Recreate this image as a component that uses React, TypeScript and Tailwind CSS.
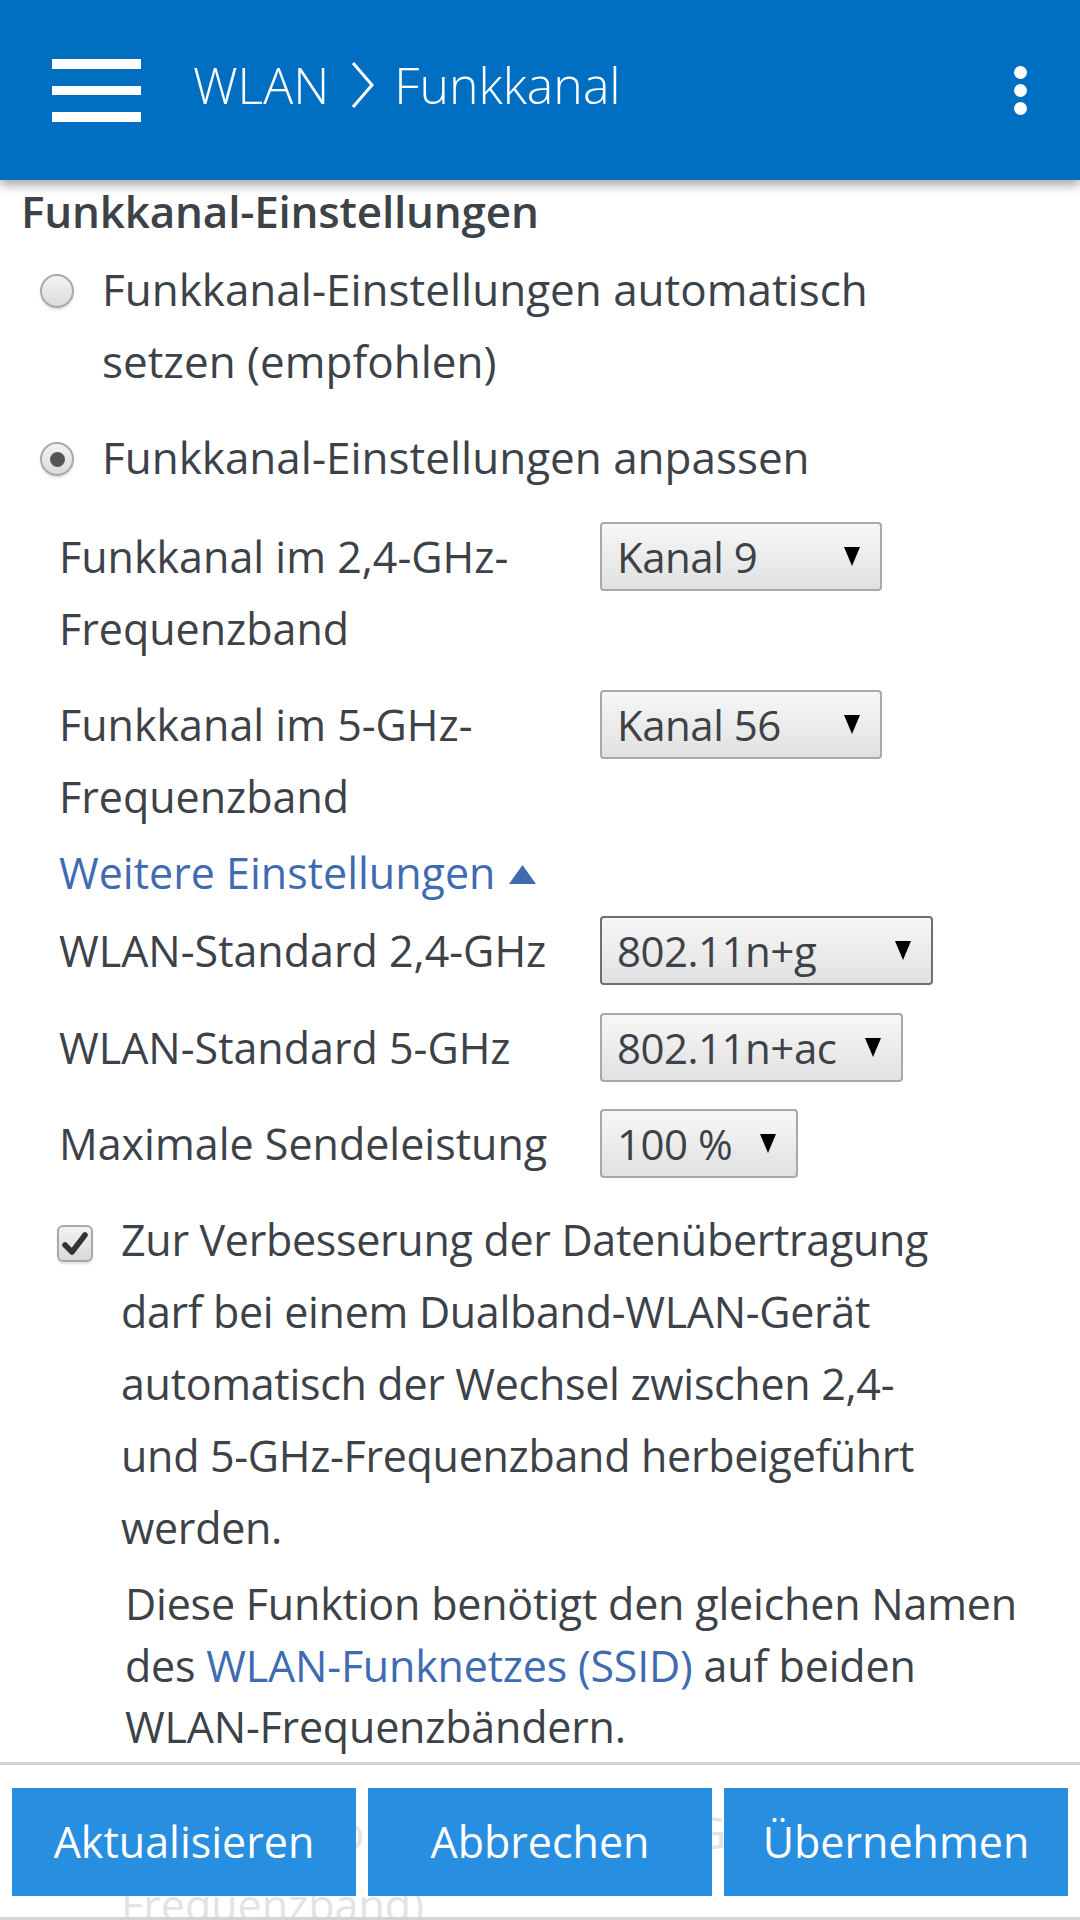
import React from "react";

const FONT = { fontFamily: '"Open Sans", "Noto Sans", Arial, sans-serif' };

function Radio({ checked }: { checked?: boolean }) {
  return (
    <div className="mt-[21px] flex h-[34px] w-[34px] shrink-0 items-center justify-center rounded-full border-2 border-[#a9a9a9] bg-gradient-to-b from-[#f2f2f2] to-[#dcdcdc] shadow-[0_2px_2px_rgba(0,0,0,0.12)]">
      {checked && <div className="h-[15px] w-[15px] rounded-full bg-[#555]" />}
    </div>
  );
}

function Select({ value, width, dark }: { value: string; width: string; dark?: boolean }) {
  return (
    <div
      className={`${width} mt-[1px] flex h-[69px] shrink-0 items-center justify-between rounded-[4px] border-2 ${
        dark ? "border-[#6f6f6f]" : "border-[#a8a8a8]"
      } bg-gradient-to-b from-[#f7f7f7] to-[#e1e1e1] pl-[15px] pr-[20px]`}
    >
      <span className="whitespace-nowrap text-[42px] leading-none tracking-[-0.5px] text-[#3c4248]">{value}</span>
      <svg width="16" height="19" viewBox="0 0 16 19" className="shrink-0">
        <polygon points="0,0 16,0 8,19" fill="#000" />
      </svg>
    </div>
  );
}

function Checkbox() {
  return (
    <div className="mt-[21px] flex h-[37px] w-[36px] shrink-0 items-center justify-center rounded-[6px] border-2 border-[#a9a9a9] bg-gradient-to-b from-[#f2f2f2] to-[#d9d9d9] shadow-[0_2px_2px_rgba(0,0,0,0.12)]">
      <svg width="26" height="26" viewBox="0 0 26 26">
        <path d="M3 14 L10 21 L23 4" fill="none" stroke="#333" strokeWidth="5.5" strokeLinecap="round" strokeLinejoin="round" />
      </svg>
    </div>
  );
}

export default function App() {
  return (
    <div style={FONT} className="relative h-[1920px] w-[1080px] overflow-hidden bg-white text-[#3c4248]">
      {/* Header */}
      <header className="relative z-10 flex h-[180px] items-center bg-[#006fc2] shadow-[0_5px_10px_rgba(0,0,0,0.35)]">
        <div className="ml-[52px] flex w-[89px] flex-col gap-[17px]">
          <div className="h-[10px] bg-white" />
          <div className="h-[9px] bg-white" />
          <div className="h-[10px] bg-white" />
        </div>
        <div className="mb-[10px] ml-[52px] flex items-center text-white">
          <span className="text-[50px] font-light leading-none">WLAN</span>
          <svg width="30" height="48" viewBox="0 0 30 48" className="ml-[18px] mr-[17px]">
            <polyline points="6,2 25,24 6,46" fill="none" stroke="#fff" strokeWidth="3" />
          </svg>
          <span className="text-[50px] font-light leading-none">Funkkanal</span>
        </div>
        <div className="ml-auto mr-[53px] flex flex-col gap-[5px]">
          <div className="h-[13px] w-[13px] rounded-full bg-white" />
          <div className="h-[13px] w-[13px] rounded-full bg-white" />
          <div className="h-[13px] w-[13px] rounded-full bg-white" />
        </div>
      </header>

      {/* Content */}
      <main className="px-[21px] text-[43px] leading-[72px]">
        <h1 className="mt-[1px] text-[44px] font-semibold leading-[60px] tracking-[-0.2px] text-[#3c4248]">
          Funkkanal-Einstellungen
        </h1>

        <div className="mt-[12px] flex pl-[19px] text-[44px]">
          <Radio />
          <div className="ml-[28px] whitespace-nowrap">
            Funkkanal-Einstellungen automatisch
            <br />
            setzen (empfohlen)
          </div>
        </div>

        <div className="mt-[24px] flex pl-[19px] text-[44px]">
          <Radio checked />
          <div className="ml-[28px] whitespace-nowrap">Funkkanal-Einstellungen anpassen</div>
        </div>

        <div className="mt-[28px] flex pl-[38px]">
          <div className="w-[541px] shrink-0 whitespace-nowrap">
            Funkkanal im 2,4-GHz-
            <br />
            Frequenzband
          </div>
          <Select value="Kanal 9" width="w-[282px]" />
        </div>

        <div className="mt-[24px] flex pl-[38px]">
          <div className="w-[541px] shrink-0 whitespace-nowrap">
            Funkkanal im 5-GHz-
            <br />
            Frequenzband
          </div>
          <Select value="Kanal 56" width="w-[282px]" />
        </div>

        <div className="mt-[4px] flex items-center pl-[38px] text-[#3f6cb1]">
          <span className="whitespace-nowrap">Weitere Einstellungen</span>
          <svg width="27" height="19" viewBox="0 0 27 19" className="ml-[14px] mt-[2px]">
            <polygon points="13.5,0 27,19 0,19" fill="#3f6cb1" />
          </svg>
        </div>

        <div className="mt-[6px] flex pl-[38px]">
          <div className="w-[541px] shrink-0 whitespace-nowrap">WLAN-Standard 2,4-GHz</div>
          <Select value="802.11n+g" width="w-[333px]" dark />
        </div>

        <div className="mt-[25px] flex pl-[38px]">
          <div className="w-[541px] shrink-0 whitespace-nowrap">WLAN-Standard 5-GHz</div>
          <Select value="802.11n+ac" width="w-[303px]" />
        </div>

        <div className="mt-[24px] flex pl-[38px]">
          <div className="w-[541px] shrink-0 whitespace-nowrap">Maximale Sendeleistung</div>
          <Select value="100 %" width="w-[198px]" />
        </div>

        <div className="mt-[24px] flex pl-[36px]">
          <Checkbox />
          <div className="ml-[28px] whitespace-nowrap tracking-[-0.3px]">
            Zur Verbesserung der Datenübertragung
            <br />
            darf bei einem Dualband-WLAN-Gerät
            <br />
            automatisch der Wechsel zwischen 2,4-
            <br />
            und 5-GHz-Frequenzband herbeigeführt
            <br />
            werden.
          </div>
        </div>

        <p className="mt-[9px] whitespace-nowrap pl-[104px] leading-[61.5px] tracking-[-0.2px]">
          Diese Funktion benötigt den gleichen Namen
          <br />
          des <span className="text-[#3f6cb1]">WLAN-Funknetzes (SSID)</span> auf beiden
          <br />
          WLAN-Frequenzbändern.
        </p>

        <div className="mt-[39px] flex pl-[36px]">
          <Checkbox />
          <div className="ml-[28px] whitespace-nowrap">
            Kanalwahl priorisieren (im 5-GHz-
            <br />
            Frequenzband)
          </div>
        </div>
      </main>

      {/* Bottom action bar */}
      <div className="absolute inset-x-0 bottom-0 z-20 flex h-[158px] flex-col border-t-[3px] border-b-[3px] border-[#d3d3d3] bg-white/85">
        <div className="mt-[23px] flex gap-[12px] px-[12px]">
          <button className="flex h-[108px] flex-1 items-center justify-center bg-[#288ee0] text-[43px] text-white">
            Aktualisieren
          </button>
          <button className="flex h-[108px] flex-1 items-center justify-center bg-[#288ee0] text-[43px] text-white">
            Abbrechen
          </button>
          <button className="flex h-[108px] flex-1 items-center justify-center bg-[#288ee0] text-[43px] text-white">
            Übernehmen
          </button>
        </div>
      </div>
    </div>
  );
}
